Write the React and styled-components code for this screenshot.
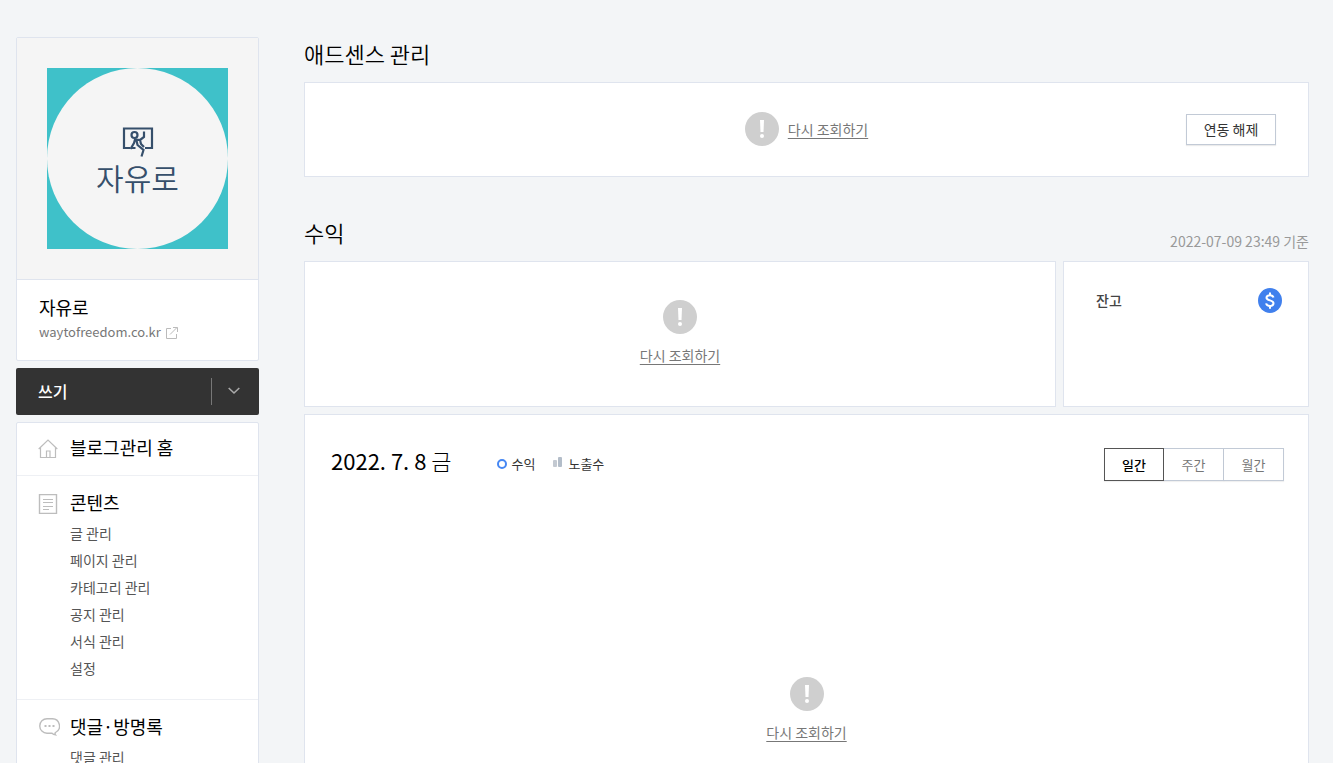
import React from "react";
import styled, { createGlobalStyle, css } from "styled-components";

const GlobalStyle = createGlobalStyle`
  *, *::before, *::after { box-sizing: border-box; }
  body {
    margin: 0;
    background: #f3f5f7;
    color: #000;
    font-family: "Noto Sans CJK KR", "Noto Sans", sans-serif;
    font-size: 14px;
    line-height: 20px;
  }
  h1, h2, h3, p, ul { margin: 0; padding: 0; font-weight: 400; }
  ul { list-style: none; }
  a { color: inherit; text-decoration: none; }
  button { font: inherit; cursor: pointer; padding: 0; }
  svg { display: block; flex: none; }
`;

const Page = styled.div`
  display: flex;
  align-items: flex-start;
  gap: 45px;
  height: 100vh;
  overflow: hidden;
  padding: 37px 24px 0 16px;
`;

const Sidebar = styled.aside`
  flex: none;
  width: 243px;
  display: flex;
  flex-direction: column;
  gap: 7px;
`;

const panel = css`
  background: #fff;
  border: 1px solid #dfe4ee;
`;

const ProfileCard = styled.section`
  ${panel}
  border-radius: 2px;
`;

const ProfileImage = styled.div`
  padding: 30px;
  background: #f5f5f5;
  border-bottom: 1px solid #dfe4ee;
`;

const LogoSquare = styled.div`
  aspect-ratio: 1;
  background: #3fc1c9;
`;

const LogoDisc = styled.div`
  display: flex;
  flex-direction: column;
  align-items: center;
  height: 100%;
  padding-top: 58px;
  border-radius: 50%;
  background: #f5f5f5;
  color: #364f6b;
`;

const LogoText = styled.span`
  font-size: 30px;
  line-height: 38px;
  font-weight: 350;
`;

const ProfileInfo = styled.div`
  height: 80px;
  padding: 15px 22px 0;
`;

const BlogName = styled.h1`
  font-size: 18px;
  line-height: 24px;
`;

const BlogLink = styled.a`
  display: flex;
  align-items: center;
  gap: 5px;
  font-size: 13px;
  line-height: 26px;
  color: #777;
`;

const WriteBar = styled.div`
  display: flex;
  align-items: center;
  height: 47px;
  border-radius: 2px;
  background: #333;
`;

const WriteButton = styled.button`
  flex: 1;
  height: 47px;
  padding: 0 0 2px 22px;
  border: 0;
  background: none;
  color: #fff;
  font-size: 16px;
  font-weight: 500;
  text-align: left;
`;

const WriteToggle = styled.button`
  display: flex;
  align-items: center;
  justify-content: center;
  width: 48px;
  height: 27px;
  padding: 0 3px 2px 0;
  border: 0;
  border-left: 1px solid #777;
  background: none;
`;

const Menu = styled.nav`
  ${panel}
  border-radius: 2px;
`;

const MenuSection = styled.section`
  padding: ${(p) => (p.$single ? "12px 21px 13px" : "14px 21px 17px")};
  & + & { border-top: 1px solid #eef0f4; }
`;

const MenuTitle = styled.a`
  display: flex;
  align-items: flex-start;
  gap: 10px;
  height: 27px;
  font-size: 18px;
  line-height: 25px;

  svg { align-self: center; }
`;

const MenuList = styled.ul`
  padding: 3px 0 0 32px;
`;

const MenuItem = styled.li`
  line-height: 27px;
  color: #555;
`;

const Main = styled.main`
  flex: 1;
  min-width: 0;
`;

const Heading = styled.header`
  display: flex;
  align-items: flex-end;
  justify-content: space-between;
  height: ${(p) => (p.$first ? "45px" : "84px")};
  padding-bottom: 12px;
`;

const Title = styled.h2`
  font-size: 22px;
  line-height: 34px;
  font-weight: 350;
`;

const Timestamp = styled.p`
  line-height: 16px;
  font-weight: 400;
  color: #999;
`;

const LinkedCard = styled.section`
  ${panel}
  display: grid;
  grid-template-columns: 1fr auto 1fr;
  align-items: center;
  height: 95px;
  padding: 0 32px 1px;
`;

const Retry = styled.div`
  display: flex;
  flex-direction: ${(p) => (p.$stacked ? "column" : "row")};
  align-items: center;
  gap: ${(p) => (p.$stacked ? "11px" : "9px")};
`;

const RetryLink = styled.a`
  color: #777;
  text-decoration: underline;
  text-underline-offset: 3px;
`;

const UnlinkButton = styled.button`
  justify-self: end;
  width: 90px;
  height: 31px;
  border: 1px solid #c2cad6;
  background: #fff;
  box-shadow: 0 1px 1px rgba(0, 0, 0, 0.08);
  color: #333;
  line-height: 28px;
`;

const Summary = styled.div`
  display: flex;
  gap: 7px;
  margin-bottom: 7px;
`;

const RevenueCard = styled.section`
  ${panel}
  flex: 1;
  height: 146px;
  padding-top: 38px;
`;

const BalanceCard = styled.section`
  ${panel}
  display: flex;
  align-items: flex-start;
  justify-content: space-between;
  width: 246px;
  padding: 26px 26px 0 32px;
`;

const BalanceTitle = styled.h3`
  font-size: 14px;
  line-height: 24px;
  font-weight: 500;
  color: #444;
`;

const ChartCard = styled.section`
  ${panel}
  height: 560px;
  padding: 33px 24px 0;
`;

const ChartHeader = styled.header`
  display: flex;
  align-items: flex-start;
  height: 33px;
  margin-bottom: 196px;
  padding-left: 2px;
`;

const ChartDate = styled.h3`
  font-size: 22px;
  line-height: 24px;
`;

const Weekday = styled.span`
  font-weight: 300;
`;

const Legend = styled.ul`
  display: flex;
  gap: 18px;
  flex: 1;
  margin-left: 45px;
  font-size: 13px;
  line-height: 31px;
  color: #333;
`;

const LegendItem = styled.li`
  display: flex;
  align-items: center;
  gap: 5px;
`;

const Periods = styled.div`
  display: flex;
`;

const PeriodButton = styled.button`
  width: 60px;
  height: 33px;
  border: 1px solid ${(p) => (p.$active ? "#555" : "#c2cad6")};
  border-left-width: ${(p) => (p.$active ? "1px" : "0")};
  background: #fff;
  box-shadow: 0 1px 1px rgba(0, 0, 0, 0.06);
  font-size: 13px;
  font-weight: ${(p) => (p.$active ? 500 : 400)};
  color: ${(p) => (p.$active ? "#000" : "#777")};
`;

const RunnerIcon = () => (
  <svg width="32" height="32" viewBox="0 0 32 32" fill="none" stroke="currentColor" strokeWidth="2.200">
    <path d="M8 22H2V2.500H30V22H23" />
    <circle cx="12.500" cy="9" r="3" />
    <path d="M22 5.500V11L18 14L13 13.500L12 17L8.500 23M9.500 22H13.500M14.500 14.500L15.500 19L21.500 24L19.500 30.500M18 14L19 18L22 21" />
  </svg>
);

const ExternalIcon = () => (
  <svg width="12" height="13" viewBox="0 0 12 13" fill="none" stroke="#bbb">
    <path d="M5 2.500H.5V12.500H10.500V8M4 8.500L11 1.500M7 1.500H11.500V6" />
  </svg>
);

const ChevronIcon = () => (
  <svg width="12" height="8" viewBox="0 0 12 8" fill="none" stroke="#aaa" strokeWidth="1.600">
    <path d="M.7 1L6 6L11.300 1" />
  </svg>
);

const HomeIcon = () => (
  <svg width="22" height="20" viewBox="0 0 22 20" fill="none" stroke="#bdbdbd" strokeWidth="1.200">
    <path d="M.7 10L10 1L19.300 10M2.500 8.500V18.500H17.500V8.500M8.500 18.500V12H12V18.500" />
  </svg>
);

const DocumentIcon = () => (
  <svg width="22" height="20" viewBox="0 0 22 20" fill="none" stroke="#bdbdbd">
    <path d="M1.500 .5H18.500V19.500H1.500Z" strokeWidth="1.400" />
    <path d="M5 5.500H15M5 8.500H15M5 12.500H15M5 15.500H11" />
  </svg>
);

const CommentIcon = () => (
  <svg width="22" height="20" viewBox="0 0 22 20" fill="none" stroke="#bdbdbd" strokeWidth="1.400">
    <path d="M9 .7H14A7.300 7.300 0 0 1 17.500 14.500Q16.500 15.700 17.500 16.900Q15.500 16.700 14 15.200H9A7.250 7.250 0 0 1 9 .7Z" />
    <path d="M6.500 8H8.500M10.500 8H12.500M14.500 8H16.500" strokeWidth="2" />
  </svg>
);

const AlertIcon = () => (
  <svg width="34" height="34" viewBox="0 0 34 34">
    <circle cx="17" cy="17" r="17" fill="#cfcfcf" />
    <path d="M15 8H19L18.500 20H15.500Z" fill="#fff" />
    <circle cx="17" cy="24" r="2" fill="#fff" />
  </svg>
);

const DollarIcon = () => (
  <svg width="24" height="25" viewBox="0 0 24 25" fill="none" stroke="#fff">
    <ellipse cx="12" cy="12.500" rx="12" ry="12.500" fill="#4080ed" stroke="none" />
    <path d="M15.500 9.500C15 7.800 13.700 7.200 12 7.200C9.900 7.200 8.500 8.200 8.500 9.800C8.500 13.200 15.500 11.600 15.500 15.300C15.500 17 14 18 12 18C9.900 18 8.500 17.200 8.100 15.400M12 4.500V7.500M12 18V20.800" strokeWidth="2" />
  </svg>
);

const RingIcon = () => (
  <svg width="10" height="10" viewBox="0 0 10 10">
    <circle cx="5" cy="5" r="4" fill="none" stroke="#4687f3" strokeWidth="2" />
  </svg>
);

const BarsIcon = () => (
  <svg width="10" height="14" viewBox="0 0 10 14">
    <rect x="0" y="3" width="4" height="7" rx="1" fill="#c3c9d1" />
    <rect x="5" y="0" width="4" height="10" rx="1" fill="#b3bdc9" />
  </svg>
);

const sections = [
  { title: "블로그관리 홈", Icon: HomeIcon, items: [] },
  {
    title: "콘텐츠",
    Icon: DocumentIcon,
    items: ["글 관리", "페이지 관리", "카테고리 관리", "공지 관리", "서식 관리", "설정"],
  },
  { title: "댓글·방명록", Icon: CommentIcon, items: ["댓글 관리", "방명록 관리"] },
];

const periods = ["일간", "주간", "월간"];

function RetryNotice({ stacked }) {
  return (
    <Retry $stacked={stacked}>
      <AlertIcon />
      <RetryLink href="#">다시 조회하기</RetryLink>
    </Retry>
  );
}

export default function App() {
  return (
    <>
      <GlobalStyle />
      <Page>
        <Sidebar>
          <ProfileCard>
            <ProfileImage>
              <LogoSquare>
                <LogoDisc>
                  <RunnerIcon />
                  <LogoText>자유로</LogoText>
                </LogoDisc>
              </LogoSquare>
            </ProfileImage>
            <ProfileInfo>
              <BlogName>자유로</BlogName>
              <BlogLink href="#">
                waytofreedom.co.kr
                <ExternalIcon />
              </BlogLink>
            </ProfileInfo>
          </ProfileCard>
          <WriteBar>
            <WriteButton>쓰기</WriteButton>
            <WriteToggle aria-label="쓰기 메뉴 열기">
              <ChevronIcon />
            </WriteToggle>
          </WriteBar>
          <Menu>
            {sections.map(({ title, Icon, items }) => (
              <MenuSection key={title} $single={items.length === 0}>
                <MenuTitle href="#">
                  <Icon />
                  {title}
                </MenuTitle>
                {items.length > 0 && (
                  <MenuList>
                    {items.map((item) => (
                      <MenuItem key={item}>
                        <a href="#">{item}</a>
                      </MenuItem>
                    ))}
                  </MenuList>
                )}
              </MenuSection>
            ))}
          </Menu>
        </Sidebar>
        <Main>
          <Heading $first>
            <Title>애드센스 관리</Title>
          </Heading>
          <LinkedCard>
            <span />
            <RetryNotice />
            <UnlinkButton>연동 해제</UnlinkButton>
          </LinkedCard>
          <Heading>
            <Title>수익</Title>
            <Timestamp>2022-07-09 23:49 기준</Timestamp>
          </Heading>
          <Summary>
            <RevenueCard>
              <RetryNotice stacked />
            </RevenueCard>
            <BalanceCard>
              <BalanceTitle>잔고</BalanceTitle>
              <DollarIcon />
            </BalanceCard>
          </Summary>
          <ChartCard>
            <ChartHeader>
              <ChartDate>
                2022. 7. 8 <Weekday>금</Weekday>
              </ChartDate>
              <Legend>
                <LegendItem>
                  <RingIcon />
                  수익
                </LegendItem>
                <LegendItem>
                  <BarsIcon />
                  노출수
                </LegendItem>
              </Legend>
              <Periods>
                {periods.map((label, i) => (
                  <PeriodButton key={label} $active={i === 0}>
                    {label}
                  </PeriodButton>
                ))}
              </Periods>
            </ChartHeader>
            <RetryNotice stacked />
          </ChartCard>
        </Main>
      </Page>
    </>
  );
}
